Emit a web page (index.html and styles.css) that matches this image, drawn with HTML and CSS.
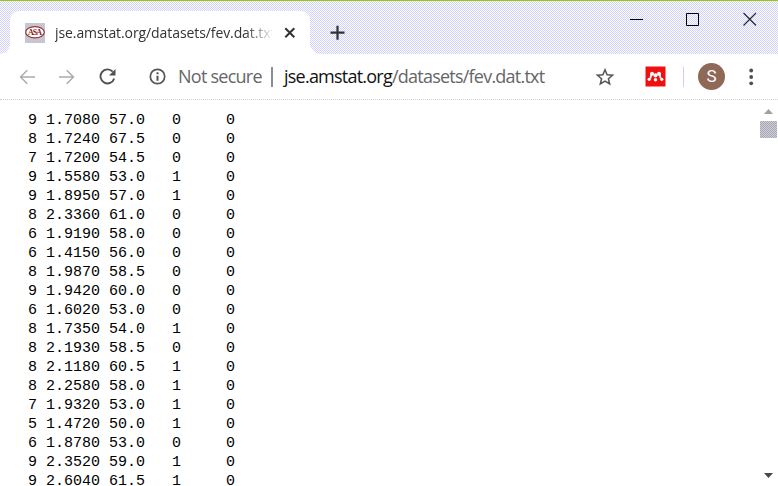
FILE: index.html
```
<!DOCTYPE html>
<html lang="en">
<head>
<meta charset="utf-8">
<title>jse.amstat.org/datasets/fev.dat.txt</title>
<link rel="stylesheet" href="styles.css">
</head>
<body>
<div class="browser">
  <header class="tabstrip">
    <div class="tab">
      <svg class="favicon" width="20" height="20" viewBox="0 0 20 20"><ellipse cx="10" cy="9.200" rx="9.300" ry="5.600" fill="#fff" stroke="#993333" stroke-width="1.200"/><text x="10" y="12" text-anchor="middle" textLength="14" class="asa">ASA</text></svg>
      <span class="tab-title">jse.amstat.org/datasets/fev.dat.txt</span>
      <svg class="tab-close" width="12" height="12" viewBox="0 0 12 12"><path d="M1.300 1.300l9 9M10.300 1.300l-9 9" stroke="#333" stroke-width="2"/></svg>
      <i class="flare left"></i><i class="flare right"></i>
    </div>
    <svg class="new-tab" width="16" height="16" viewBox="0 0 16 16"><path d="M7.500 .7v14M.5 7.700h14" stroke="#333" stroke-width="2.200"/></svg>
    <div class="window-controls">
      <svg width="14" height="14" viewBox="0 0 14 14"><path d="M1 7.500h13" stroke="#000"/></svg>
      <svg width="14" height="14" viewBox="0 0 14 14"><path d="M.5 1.500h12v12H.5z" fill="none" stroke="#000"/></svg>
      <svg width="14" height="14" viewBox="0 0 14 14"><path d="M.5 1l12.500 12.500M13 1L.5 13.500" stroke="#222" stroke-width="1.100"/></svg>
    </div>
  </header>
  <nav class="toolbar">
    <svg class="back" width="17" height="16" viewBox="0 0 17 16"><path d="M16 8H1.500M8.300 1.200L1.500 8l6.800 6.800" fill="none" stroke="#aaa" stroke-width="1.400"/></svg>
    <svg class="forward" width="17" height="16" viewBox="0 0 17 16"><path d="M0 8h14.500M7.700 1.200L14.500 8l-6.800 6.800" fill="none" stroke="#aaa" stroke-width="1.400"/></svg>
    <svg class="reload" width="18" height="18" viewBox="0 0 18 18"><path d="M13.700 3.700A7 7 0 1 0 15.200 10.500" fill="none" stroke="#505056" stroke-width="1.900"/><path d="M16.500 1v6.500H10z" fill="#505056"/></svg>
    <svg class="info" width="18" height="18" viewBox="0 0 18 18"><circle cx="8.500" cy="8.500" r="7.200" fill="none" stroke="#555" stroke-width="1.700"/><path d="M8.500 7.700v5M8.500 4.200v2" stroke="#555" stroke-width="2"/></svg>
    <span class="security">Not secure</span>
    <i class="rule"></i>
    <span class="url"><b>jse.amstat.org</b>/datasets/fev.dat.txt</span>
    <svg class="star" width="18" height="18" viewBox="0 0 18 18"><path d="M9 1.800l2.100 5 5.400.4-4.100 3.500 1.300 5.300L9 13.200 4.300 16l1.300-5.300L1.500 7.200l5.400-.4z" fill="none" stroke="#555" stroke-width="1.500"/></svg>
    <svg class="mendeley" width="21" height="21" viewBox="0 0 21 21"><path fill="#f01010" d="M.5.5h20v20H.5z"/><g fill="#fff"><circle cx="7" cy="7.700" r="2"/><circle cx="14" cy="7.700" r="2"/><circle cx="10.500" cy="9.300" r="2.100"/><circle cx="4.200" cy="13.300" r="1.600"/><circle cx="10.500" cy="13.700" r="1.700"/><circle cx="16.800" cy="13.300" r="1.600"/></g><path d="M6.500 8l-1.200 4.500M14.500 8l1.200 4.500" stroke="#fff" stroke-width="1.700" fill="none"/></svg>
    <i class="divider"></i>
    <span class="avatar">S</span>
    <svg class="menu" width="5" height="18" viewBox="0 0 5 18" fill="#505050"><circle cx="2.200" cy="2.500" r="1.900"/><circle cx="2.200" cy="9" r="1.900"/><circle cx="2.200" cy="15.300" r="1.900"/></svg>
  </nav>
  <main class="page">
<pre class="data">
   9 1.7080 57.0   0     0
   8 1.7240 67.5   0     0
   7 1.7200 54.5   0     0
   9 1.5580 53.0   1     0
   9 1.8950 57.0   1     0
   8 2.3360 61.0   0     0
   6 1.9190 58.0   0     0
   6 1.4150 56.0   0     0
   8 1.9870 58.5   0     0
   9 1.9420 60.0   0     0
   6 1.6020 53.0   0     0
   8 1.7350 54.0   1     0
   8 2.1930 58.5   0     0
   8 2.1180 60.5   1     0
   8 2.2580 58.0   1     0
   7 1.9320 53.0   1     0
   5 1.4720 50.0   1     0
   6 1.8780 53.0   0     0
   9 2.3520 59.0   1     0
   9 2.6040 61.5   1     0
</pre>
    <div class="scrollbar">
      <svg width="9" height="5" viewBox="0 0 9 5"><path d="M0 5l4.500-5L9 5z" fill="#a0a0a0"/></svg>
      <i class="thumb"></i>
      <svg class="down" width="9" height="5" viewBox="0 0 9 5"><path d="M0 0l4.500 5L9 0z" fill="#484850"/></svg>
    </div>
  </main>
</div>
</body>
</html>
```
FILE: styles.css
```
* { box-sizing: border-box; }
body { margin: 0; background: #fff; font-family: "Open Sans", "Noto Sans", sans-serif; }
svg { display: block; flex: none; }
i { display: block; flex: none; }
.browser { width: 778px; height: 486px; overflow: hidden; display: flex; flex-direction: column; }
.tabstrip {
  height: 54px; flex: none; display: flex; align-items: flex-start;
  border-top: 1px solid #99cc00; padding: 10px 21px 0 10px;
  background: repeating-conic-gradient(#d2d2ff 0 25%, #fafaff 0 50%) 0 0 / 2px 2px;
}
.tab {
  position: relative; width: 300px; height: 43px; background: #fff;
  border-radius: 9px 9px 0 0; display: flex; align-items: center; padding: 0 14px 0 15px;
}
.favicon { background: repeating-conic-gradient(#cccccc 0 25%, #c0c0d8 0 50%) 0 0 / 2px 2px; }
.asa { font: bold 8px "Liberation Serif", serif; fill: #882222; }
.tab-title {
  margin-left: 10px; width: 217px; overflow: hidden; white-space: nowrap;
  font-size: 14px; line-height: 20px; color: #333; letter-spacing: -.09px;
  mask-image: linear-gradient(90deg, #000 190px, transparent 219px);
}
.tab-close { margin-left: 12px; }
.flare { position: absolute; bottom: 0; width: 10px; height: 10px; }
.flare.left { left: -10px; background: radial-gradient(circle at 0 0, transparent 9.500px, #fff 10px); }
.flare.right { right: -10px; background: radial-gradient(circle at 100% 0, transparent 9.500px, #fff 10px); }
.new-tab { margin: 14px 0 0 20px; }
.window-controls { margin-left: auto; display: flex; gap: 43px; padding-top: 1px; }
.toolbar { height: 46px; flex: none; display: flex; align-items: center; padding-left: 19px; border-bottom: 1px dotted #ccccdd; font-size: 18px; }
.forward { margin-left: 23px; }
.reload { margin-left: 23px; }
.info { margin-left: 32px; }
.security, .url { padding-bottom: 2px; }
.security { margin-left: 11px; width: 85px; color: #666; white-space: nowrap; letter-spacing: -.75px; }
.rule { margin-left: 8px; width: 2px; height: 20px; background: #8c8c99; }
.url { margin-left: 11px; width: 262px; white-space: nowrap; color: #666; letter-spacing: -.77px; }
.url b { font-weight: 400; color: #111; }
.star { margin-left: 50px; }
.mendeley { margin-left: 31px; }
.divider { margin-left: 17px; width: 1px; height: 20px; background: #ccccff; }
.avatar { margin-left: 14px; width: 27px; height: 27px; flex: none; border-radius: 50%; background: #8f6857; color: #fff; font: 17px/27px Roboto, sans-serif; text-align: center; }
.menu { margin-left: 24px; }
.page { flex: 1; min-height: 0; display: flex; justify-content: space-between; }
.data { margin: 11px 0 0 1px; font: 15px/19px "Liberation Mono", monospace; color: #000; }
.scrollbar { width: 18px; flex: none; display: flex; flex-direction: column; align-items: center; padding: 9px 1px 8px 0; }
.thumb { width: 17px; height: 17px; margin-top: 7px; background: repeating-conic-gradient(#a9a9b0 0 25%, #ccccdd 0 50%) 0 0 / 2px 2px; }
.down { margin-top: auto; }
```
